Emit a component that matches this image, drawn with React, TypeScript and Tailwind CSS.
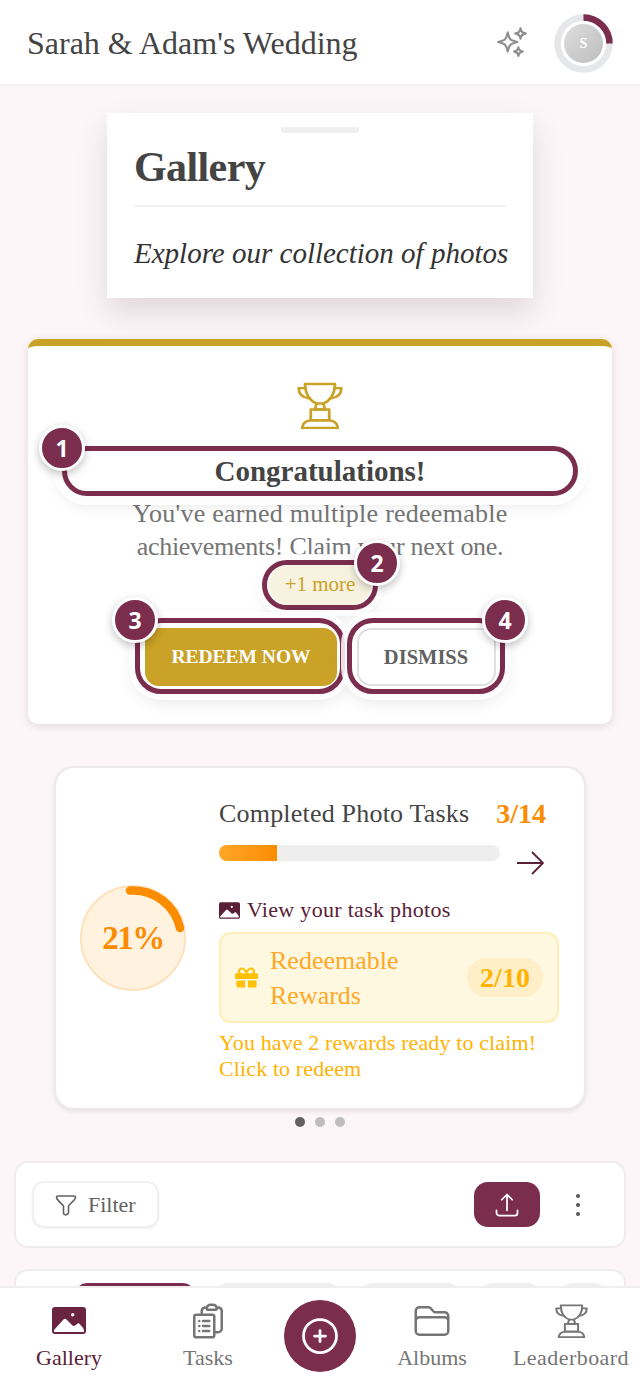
import React from "react";
import {
  HiOutlineSparkles,
  HiOutlineClipboardDocumentList,
  HiOutlineFolder,
  HiOutlineArrowUpTray,
  HiOutlinePlusCircle,
} from "react-icons/hi2";
import { FaGift } from "react-icons/fa";

function ImageIcon({ className }: { className: string }) {
  return (
    <svg viewBox="0 0 34 27" className={className}>
      <rect width="34" height="27" rx="3" fill="currentColor" />
      <path
        d="M2 25 V23 L11.5 12.5 Q13 11 14.5 12.5 L20 18 Q21.5 19.5 23 18.5 L26.5 16 Q32 21 32 23.5 V25 Z"
        fill="#ffffff"
      />
      <circle cx="20.7" cy="7.7" r="1.7" fill="#ffffff" />
    </svg>
  );
}

function TrophyIcon({ className }: { className: string }) {
  return (
    <svg viewBox="0 0 40 46" className={className} fill="none" stroke="currentColor" strokeWidth="2.4" strokeLinejoin="round" strokeLinecap="round" preserveAspectRatio="none">
      <path d="M7 2 H33 C33 12 28.5 18.5 23 21 H17 C11.5 18.5 7 12 7 2 Z" />
      <path d="M7.5 6 H1.5 C1.5 11 4.5 15 10.5 16" />
      <path d="M32.5 6 H38.5 C38.5 11 35.5 15 29.5 16" />
      <path d="M17 21 L15.5 27 H24.5 L23 21" />
      <path d="M12 27 H28 V37.5 H12 Z" />
      <path d="M4.5 45 Q5 38.5 12 37.5 H28 Q35 38.5 35.5 45 Z" />
    </svg>
  );
}

function Badge({ n, className }: { n: string; className: string }) {
  return (
    <div
      className={
        "absolute z-20 flex h-[46px] w-[46px] items-center justify-center rounded-full border-[3px] border-white bg-[#7b2d4e] font-['Open_Sans',sans-serif] text-[23px] font-bold text-white shadow-[0_3px_8px_rgba(0,0,0,0.25)] " +
        className
      }
    >
      {n}
    </div>
  );
}

function NavItem({
  icon,
  label,
  active,
  labelClass,
}: {
  icon: React.ReactNode;
  label: string;
  active?: boolean;
  labelClass?: string;
}) {
  return (
    <div className={"mb-[2px] flex flex-col items-center " + (active ? "text-[#5b2038]" : "text-[#757575]")}>
      <div className="flex h-[40px] items-center justify-center">{icon}</div>
      <div className={"mt-[4px] text-[22px] leading-[26px] " + (labelClass ?? "")}>{label}</div>
    </div>
  );
}

export default function App() {
  return (
    <div className="flex h-[1385px] w-[640px] flex-col overflow-hidden bg-[#fdf6f8] font-['Liberation_Serif',serif]">
      <header className="flex h-[86px] shrink-0 items-center justify-between border-b-2 border-[#f2f0f0] bg-white pl-[27px] pr-[27px] pt-[2px]">
        <div className="text-[32px] leading-none text-[#444444]">Sarah &amp; Adam's Wedding</div>
        <div className="flex items-center gap-[25px]">
          <HiOutlineSparkles className="mb-[3px] h-[34px] w-[34px] text-[#8e8e8e]" />
          <div className="relative flex h-[59px] w-[59px] items-center justify-center">
            <svg viewBox="0 0 59 59" className="absolute inset-0 h-full w-full">
              <circle cx="29.5" cy="29.5" r="26" fill="none" stroke="#e6e7e9" strokeWidth="6.5" />
              <path d="M29.5 3.5 A26 26 0 0 1 55.5 29.5" fill="none" stroke="#7b2d4e" strokeWidth="6.5" />
            </svg>
            <div className="flex h-[39px] w-[39px] items-center justify-center rounded-full bg-gradient-to-br from-[#dedede] to-[#bdbdbd] text-[14px] font-bold text-white">
              S
            </div>
          </div>
        </div>
      </header>

      <main className="min-h-0 flex-1 overflow-hidden">
        <section className="mx-auto mt-[27px] h-[185px] w-[426px] bg-white px-[27px] pt-[14px] shadow-[0_14px_30px_rgba(0,0,0,0.12)]">
          <div className="mx-auto h-[6px] w-[78px] rounded-full bg-[#f0f0f0]" />
          <h1 className="mt-[6px] text-[42px] font-bold leading-[56px] tracking-[-0.6px] text-[#444444]">Gallery</h1>
          <div className="mt-[10px] h-[2px] bg-[#f0f0f0]" />
          <p className="mt-[24px] text-[29px] italic leading-[44px] whitespace-nowrap text-[#333333]">
            Explore our collection of photos
          </p>
        </section>

        <section className="mx-[28px] mt-[41px] flex h-[385px] flex-col items-center rounded-[10px] border-t-[7px] border-[#c9a227] bg-white pt-[36px] shadow-[0_2px_10px_rgba(0,0,0,0.12)]">
          <TrophyIcon className="h-[47px] w-[46px] text-[#c9a227]" />
          <div className="relative z-10 mt-[17px] flex h-[50px] w-[516px] shrink-0 items-center justify-center rounded-full border-[5px] border-[#7b2d4e] bg-white shadow-[0_0_0_9px_rgba(255,255,255,0.9),0_6px_18px_rgba(0,0,0,0.14)]">
            <span className="pt-[1px] text-[29px] font-bold leading-none text-[#444444]">Congratulations!</span>
            <Badge n="1" className="left-[-28px] top-[-26px]" />
          </div>
          <p className="relative z-0 mt-[1px] w-[440px] text-center text-[26px] leading-[33px] tracking-[0.25px] text-[#757575]">
            You've earned multiple redeemable
            <br />
            <span className="tracking-[-0.28px]">achievements! Claim your next one.</span>
          </p>
          <div className="relative z-10 mt-[-3px] flex h-[50px] w-[116px] shrink-0 items-center justify-center rounded-full border-[5px] border-[#7b2d4e] bg-white shadow-[0_0_0_6px_rgba(255,255,255,0.85),0_6px_14px_rgba(0,0,0,0.1)]">
            <div className="flex h-[40px] w-[102px] items-center justify-center rounded-full bg-[#f8f3e0] text-[21px] text-[#c9a227]">
              +1 more
            </div>
            <Badge n="2" className="left-[87px] top-[-25px]" />
          </div>
          <div className="relative z-10 mt-[8px] flex gap-[2px]">
            <div className="relative flex h-[76px] w-[210px] items-center justify-center rounded-[26px] border-[5px] border-[#7b2d4e] bg-white shadow-[0_0_0_6px_rgba(255,255,255,0.85),0_6px_18px_rgba(0,0,0,0.12)]">
              <div className="ml-[2px] mt-[2px] flex h-[58px] w-[192px] items-center justify-center rounded-[14px] bg-[#c9a227] text-[19.5px] font-bold text-white">
                REDEEM NOW
              </div>
              <Badge n="3" className="left-[-28px] top-[-26px]" />
            </div>
            <div className="relative flex h-[76px] w-[158px] items-center justify-center rounded-[26px] border-[5px] border-[#7b2d4e] bg-white shadow-[0_0_0_6px_rgba(255,255,255,0.85),0_6px_18px_rgba(0,0,0,0.12)]">
              <div className="mt-[2px] flex h-[58px] w-[139px] items-center justify-center rounded-[14px] border-2 border-[#e0e0e0] bg-white text-[20.5px] font-bold text-[#616161]">
                DISMISS
              </div>
              <Badge n="4" className="left-[130px] top-[-26px]" />
            </div>
          </div>
        </section>

        <section className="mx-[54px] mt-[42px] flex h-[344px] items-center rounded-[20px] border-2 border-[#ebe9e9] bg-white shadow-[0_2px_4px_rgba(0,0,0,0.08)]">
          <div className="relative ml-[24px] mr-[33px] flex h-[106px] w-[106px] shrink-0 items-center justify-center rounded-full border-2 border-[#fde2bd] bg-[#fff3e0]">
            <svg viewBox="0 0 106 106" className="absolute inset-[-2px] h-[106px] w-[106px]">
              <path d="M50 5.5 A48 48 0 0 1 100 43" fill="none" stroke="#fb8c00" strokeWidth="8.5" strokeLinecap="round" />
            </svg>
            <span className="pt-[2px] text-[33px] font-bold tracking-[-1.5px] text-[#fb8c00]">21%</span>
          </div>
          <div className="mt-[4px] w-[340px] shrink-0">
            <div className="flex items-center justify-between pr-[13px]">
              <span className="text-[26px] leading-[32px] tracking-[0.2px] text-[#444444]">Completed Photo Tasks</span>
              <span className="text-[28px] font-bold leading-[32px] text-[#fb8c00]">3/14</span>
            </div>
            <div className="mt-[9px] flex items-start">
              <div className="mt-[6px] h-[16px] w-[281px] overflow-hidden rounded-full bg-[#eeeeee]">
                <div className="h-full w-[58px] bg-gradient-to-r from-[#ffa726] to-[#fb8c00]" />
              </div>
              <svg viewBox="0 0 28 26" className="ml-[16px] mt-[11px] h-[26px] w-[28px] text-[#5b2038]" fill="none" stroke="currentColor" strokeWidth="1.8">
                <path d="M1 13 H26 M16 2 L27 13 L16 24" />
              </svg>
            </div>
            <div className="mt-[21px] flex items-center">
              <ImageIcon className="h-[17px] w-[21px] text-[#5b2038]" />
              <span className="ml-[7px] text-[22px] leading-[26px] tracking-[0.3px] text-[#5b2038]">View your task photos</span>
            </div>
            <div className="mt-[9px] flex h-[91px] items-center rounded-[12px] border-2 border-[#ffeeb8] bg-[#fff8e1] pl-[14px] pr-[14px]">
              <FaGift className="h-[23px] w-[23px] shrink-0 text-[#ffc107]" />
              <div className="ml-[12px] flex-1 text-[26px] leading-[35px] text-[#ffa726]">
                Redeemable
                <br />
                Rewards
              </div>
              <div className="flex h-[39px] w-[76px] items-center justify-center rounded-full bg-[#ffefc8] text-[28px] font-bold text-[#ffb300]">
                2/10
              </div>
            </div>
            <div className="mt-[7px] text-[22px] leading-[26px] tracking-[0.12px] text-[#ffb300]">
              You have 2 rewards ready to claim!
              <br />
              Click to redeem
            </div>
          </div>
        </section>

        <div className="mt-[7px] flex justify-center gap-[10px]">
          <div className="h-[10px] w-[10px] rounded-full bg-[#616161]" />
          <div className="h-[10px] w-[10px] rounded-full bg-[#bdbdbd]" />
          <div className="h-[10px] w-[10px] rounded-full bg-[#bdbdbd]" />
        </div>

        <section className="mx-[14px] mt-[34px] flex h-[87px] items-center rounded-[14px] border-2 border-[#efecec] bg-white pl-[16px] pr-[44px]">
          <div className="flex h-[47px] w-[127px] items-center rounded-[12px] border-2 border-[#f0f0f0] bg-white pl-[20px] shadow-[0_1px_2px_rgba(0,0,0,0.06)]">
            <svg viewBox="0 0 24 24" className="h-[24px] w-[24px] text-[#616161]" fill="none" stroke="currentColor" strokeWidth="1.6" strokeLinejoin="round">
              <path d="M2.5 4.5 C2.5 3.5 3.2 3 4 3 H20 C21 3 21.6 3.6 21.5 4.6 C21 7.5 15.5 11 14.5 13 V19 C14.5 21 12.5 22 10.8 21.6 C10 21.4 9.5 20.7 9.5 20 V13 C8.5 11 3 7.5 2.5 4.5 Z" />
            </svg>
            <span className="ml-[10px] text-[22px] leading-none text-[#616161]">Filter</span>
          </div>
          <div className="flex-1" />
          <div className="flex h-[45px] w-[66px] items-center justify-center rounded-[14px] bg-[#7b2d4e]">
            <HiOutlineArrowUpTray className="h-[28px] w-[28px] text-white" />
          </div>
          <div className="ml-[36px] flex flex-col gap-[5px]">
            <div className="h-[4px] w-[4px] rounded-full bg-[#555555]" />
            <div className="h-[4px] w-[4px] rounded-full bg-[#555555]" />
            <div className="h-[4px] w-[4px] rounded-full bg-[#555555]" />
          </div>
        </section>

        <section className="mx-[14px] mt-[21px] flex h-[80px] gap-[20px] rounded-[14px] border-2 border-[#efecec] bg-white pl-[59px] pt-[12px]">
          <div className="h-[50px] w-[120px] rounded-[12px] bg-[#7b2d4e]" />
          <div className="h-[50px] w-[125px] rounded-[12px] bg-[#f0f0f0]" />
          <div className="h-[50px] w-[100px] rounded-[12px] bg-[#f0f0f0]" />
          <div className="h-[50px] w-[60px] rounded-[12px] bg-[#f0f0f0]" />
          <div className="h-[50px] w-[47px] rounded-[12px] bg-[#f0f0f0]" />
        </section>
      </main>

      <nav className="relative z-30 grid h-[99px] shrink-0 grid-cols-[138px_140px_84px_140px_138px] items-center border-t-2 border-[#f0eeee] bg-white">
        <NavItem label="Gallery" active icon={<ImageIcon className="h-[27px] w-[34px] text-[#6b2440]" />} />
        <NavItem label="Tasks" icon={<HiOutlineClipboardDocumentList className="h-[40px] w-[40px]" />} />
        <div className="mb-[2px] flex justify-center">
          <div className="flex h-[72px] w-[72px] items-center justify-center rounded-full bg-[#7b2d4e]">
            <HiOutlinePlusCircle className="h-[44px] w-[44px] text-white" />
          </div>
        </div>
        <NavItem label="Albums" icon={<HiOutlineFolder className="h-[40px] w-[40px]" />} />
        <NavItem label="Leaderboard" labelClass="tracking-[0.45px]" icon={<TrophyIcon className="h-[34px] w-[33px]" />} />
      </nav>
    </div>
  );
}
